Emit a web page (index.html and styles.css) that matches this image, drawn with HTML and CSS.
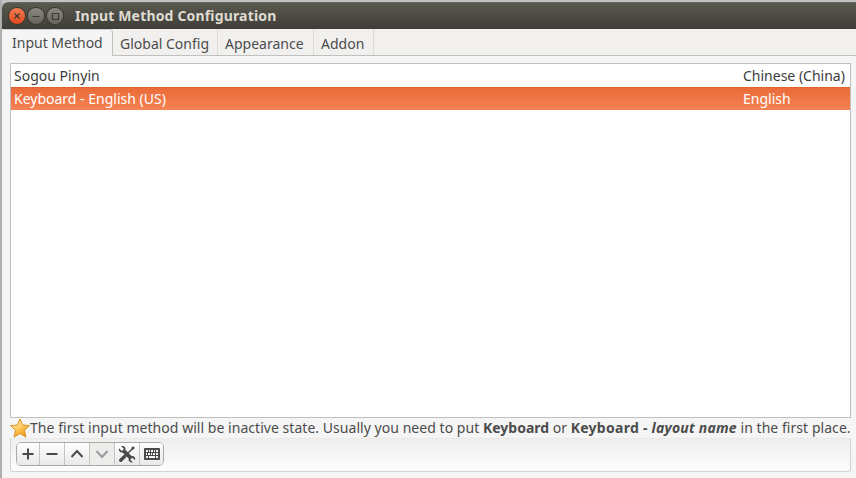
FILE: index.html
```html
<!DOCTYPE html>
<html lang="en">
<head>
    <meta charset="UTF-8">
    <title>Input Method Configuration</title>
    <link rel="stylesheet" href="styles.css">
</head>
<body>
    <div class="window">
        <header class="titlebar">
            <div class="controls">
                <span class="control close">
                    <svg width="16" height="16" viewBox="0 0 16 16"><path d="M5.500 5.500l5 5M10.500 5.500l-5 5"/></svg>
                </span>
                <span class="control">
                    <svg width="16" height="16" viewBox="0 0 16 16"><path d="M4.500 8.500h7"/></svg>
                </span>
                <span class="control">
                    <svg width="16" height="16" viewBox="0 0 16 16"><path d="M5.500 5.500h6v6h-6z"/></svg>
                </span>
            </div>
            <h1>Input Method Configuration</h1>
        </header>

        <nav class="tabs">
            <a class="tab active">Input Method</a>
            <a class="tab tab-global">Global Config</a>
            <a class="tab tab-appearance">Appearance</a>
            <a class="tab tab-addon">Addon</a>
        </nav>

        <main class="page">
            <ul class="method-list">
                <li><span>Sogou Pinyin</span><span class="lang">Chinese (China)</span></li>
                <li class="selected"><span>Keyboard - English (US)</span><span class="lang">English</span></li>
            </ul>

            <div class="note">
                <svg class="star" width="20" height="20" viewBox="0 0 20 20">
                    <defs>
                        <linearGradient id="gold" x1="0" y1="0" x2="0.6" y2="1">
                            <stop offset="0.2" stop-color="#fff0b0"/>
                            <stop offset="0.65" stop-color="#fbc04e"/>
                            <stop offset="1" stop-color="#f39a1c"/>
                        </linearGradient>
                    </defs>
                    <path d="M10 1l2.700 6 6.700.7-5 4.500 1.600 6.900-6-3.500-6 3.500 1.600-6.900-5-4.500 6.700-.7z" fill="url(#gold)" stroke="#d99022" stroke-linejoin="round"/>
                </svg>
                <p><span class="hint">The first input method will be inactive state. Usually you need to put </span><b>Keyboard</b> or <b class="keyboard">Keyboard - </b><b class="layout"><i>layout name</i></b><span class="place"> in the first place.</span></p>
            </div>

            <div class="toolbar">
                <div class="buttons">
                    <button><svg width="22" height="22" viewBox="0 0 22 22"><path d="M5.500 11h11M11 5.500v11"/></svg></button>
                    <button><svg width="24" height="22" viewBox="0 0 24 22"><path d="M6.500 11h11"/></svg></button>
                    <button><svg width="24" height="22" viewBox="0 0 24 22"><path d="M6.500 14l5.500-6 5.500 6"/></svg></button>
                    <button disabled><svg width="24" height="22" viewBox="0 0 24 22"><path d="M6.500 8l5.500 6 5.500-6"/></svg></button>
                    <button>
                        <svg width="24" height="22" viewBox="0 0 24 22">
                            <path class="solid" d="M4 5.300l2.500 2.400 1.700-.4.400-1.700L6.200 3.200c2.600-.8 4.800 1 4.300 3.800l6.100 6.100c2.500-.4 4.200 1.700 3.500 4.200l-2.400-2.300-1.700.4-.5 1.700 2.400 2.300c-2.600.7-4.800-1.200-4.300-3.800L7.500 9.500C5 10 3.300 7.900 4 5.300z"/>
                            <path class="thin" d="M18.800 4.200l-6 6"/>
                            <path class="handle" d="M9.800 13.200l-4.100 4.100"/>
                            <path class="solid" d="M18.200 3.200l1.700 1.700-2 2-1.800-1.800z"/>
                        </svg>
                    </button>
                    <button>
                        <svg width="24" height="22" viewBox="0 0 24 22">
                            <rect class="solid" x="4" y="5" width="16" height="12" rx="1"/>
                            <path class="keys" d="M6 8h2m1 0h1m1 0h2m1 0h1m1 0h2M6 11h1m1 0h2m1 0h1m1 0h2m1 0h2M6 14h2m1 0h6m1 0h2"/>
                        </svg>
                    </button>
                </div>
            </div>
        </main>
    </div>
</body>
</html>
```
FILE: styles.css
```css
* {
    box-sizing: border-box;
}
body {
    margin: 0;
    padding: 2px 0 0 2px;
    height: 478px;
    overflow: hidden;
    background: linear-gradient(90deg, #b5b5b3, #a5a5a3 2px, #c2c5c1 2px);
    font-family: "Noto Sans", "Open Sans", sans-serif;
    font-size: 14px;
    color: #4c4c4c;
}
.window {
    height: 476px;
    background: #f5f5f5;
    border-radius: 6px 0 0 0;
    overflow: hidden;
}
.titlebar {
    display: flex;
    align-items: center;
    height: 27px;
    padding: 0 0 1px 7px;
    background: linear-gradient(#5a594f, #3e3d38);
    border-top: 1px solid #66675d;
}
.titlebar h1 {
    margin: 0 0 0 12px;
    font-size: 14px;
    line-height: 25px;
    color: #dfdbd2;
    letter-spacing: 0.17px;
    white-space: nowrap;
}
.controls {
    display: flex;
    gap: 3px;
}
.control {
    width: 16px;
    height: 16px;
    border-radius: 50%;
    background: linear-gradient(#8a887f, #66645d);
    box-shadow: 0 0 0 1px #37362f;
}
.control svg {
    display: block;
    fill: none;
    stroke: #3c3b37;
    stroke-width: 1.2;
}
.control.close {
    background: linear-gradient(#f37b55, #df4a1b);
}
.tabs {
    display: flex;
    height: 27px;
    background: #f1f0ef;
    border-bottom: 1px solid #c0c0be;
}
.tab {
    height: 26px;
    line-height: 29px;
    padding-left: 7px;
    border-right: 1px solid #dddcda;
    white-space: nowrap;
}
.tab.active {
    width: 111px;
    height: 27px;
    padding-left: 10px;
    line-height: 25px;
    background: #f5f5f5;
    border-top: 1px solid #d0d0ce;
    border-right: 1px solid #c0c0be;
    border-radius: 4px 4px 0 0;
}
.tab-global {
    width: 105px;
}
.tab-appearance {
    width: 96px;
}
.tab-addon {
    width: 60px;
}
.page {
    padding: 7px 5px 0 8px;
}
.method-list {
    width: 841px;
    height: 355px;
    margin: 0;
    padding: 0;
    list-style: none;
    background: #fff;
    border: 1px solid #c0c0be;
}
.method-list li {
    display: flex;
    justify-content: space-between;
    height: 23px;
    line-height: 23px;
    padding-left: 3px;
    color: #3c3c3c;
    white-space: nowrap;
}
.method-list .selected {
    line-height: 21px;
    color: #fff;
    background: linear-gradient(#ea6b38, #f68254);
    border-top: 1px solid #e0632f;
}
.lang {
    width: 107px;
}
.note {
    display: flex;
    height: 20px;
}
.note p {
    margin: 0;
    line-height: 20px;
    white-space: pre;
}
.hint {
    letter-spacing: 0.04px;
}
.keyboard {
    letter-spacing: 0.27px;
}
.layout {
    letter-spacing: 0.2px;
}
.place {
    letter-spacing: 0.05px;
}
.star {
    flex: none;
}
.toolbar {
    width: 841px;
    height: 34px;
    padding: 3px 0 0 5px;
    background: linear-gradient(#f0efee, #fcfcfc);
    border: 1px solid #d3d3d1;
    border-top-color: #eae9e8;
    border-radius: 0 0 3px 3px;
}
.buttons {
    display: flex;
    width: 148px;
    height: 24px;
    border: 1px solid #a9a9a6;
    border-radius: 5px;
    overflow: hidden;
}
.buttons button {
    width: 25px;
    height: 22px;
    padding: 0;
    border: 0;
    border-right: 1px solid #c4c4c1;
    background: linear-gradient(#fefefe, #e9e9e8);
}
.buttons button:first-child {
    width: 23px;
}
.buttons button:last-child {
    width: 24px;
    border-right: 0;
}
.buttons button:disabled {
    background: #ececeb;
}
.buttons svg {
    display: block;
    fill: none;
    stroke: #4a4a4a;
    stroke-width: 2;
}
.buttons button:disabled svg {
    stroke: #999;
}
.buttons .solid {
    fill: #4a4a4a;
    stroke: none;
}
.buttons .thin {
    stroke-width: 1.4;
}
.buttons .handle {
    stroke-width: 3.4;
    stroke-linecap: round;
}
.buttons .keys {
    stroke: #f4f4f4;
    stroke-width: 2;
}
```
